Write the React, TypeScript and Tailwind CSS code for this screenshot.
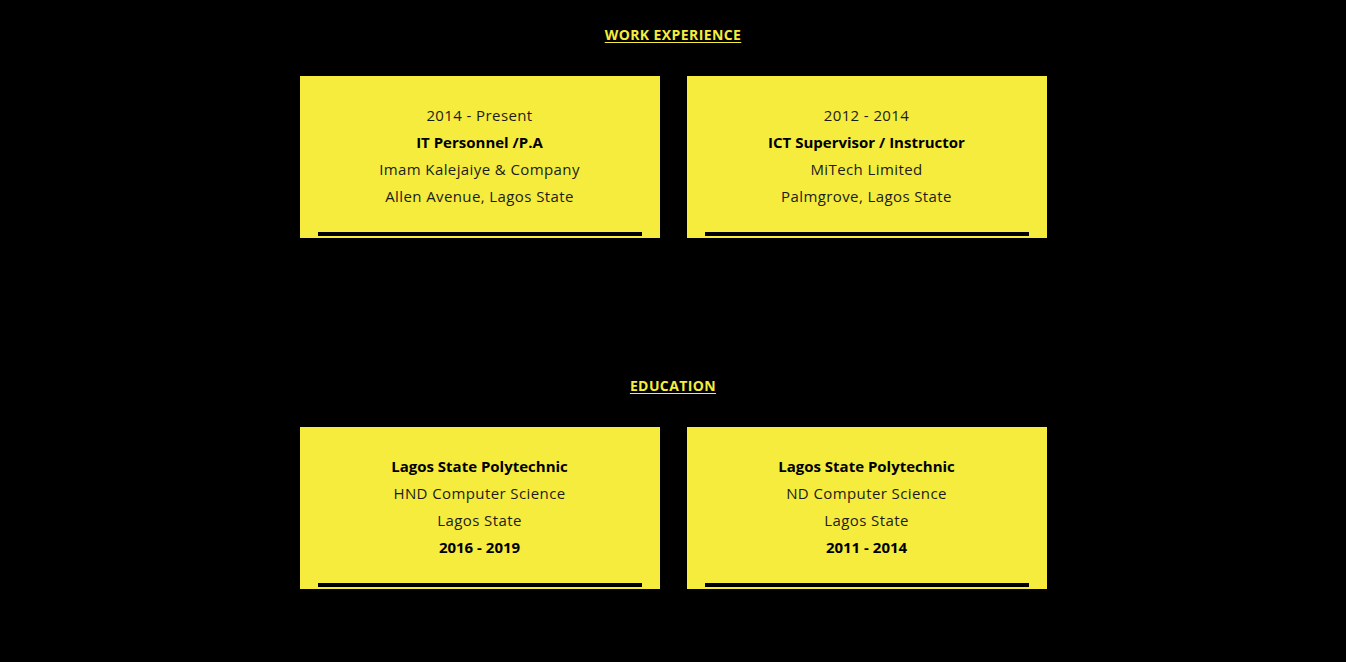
const work = [
	{ period: "2014 - Present", role: "IT Personnel /P.A", company: "Imam Kalejaiye & Company", place: "Allen Avenue, Lagos State" },
	{ period: "2012 - 2014", role: "ICT Supervisor / Instructor", company: "MiTech Limited", place: "Palmgrove, Lagos State" },
];

const education = [
	{ school: "Lagos State Polytechnic", course: "HND Computer Science", place: "Lagos State", years: "2016 - 2019" },
	{ school: "Lagos State Polytechnic", course: "ND Computer Science", place: "Lagos State", years: "2011 - 2014" },
];

function Card({ children }: { children: React.ReactNode }) {
	return (
		<div className="w-[360px] bg-[#f5ec3d] pt-[26px] pb-[2px] text-center">
			<div className="flex flex-col text-[15px] leading-[27px] tracking-[0.4px] text-[#1c1c1c]">{children}</div>
			<div className="mx-[18px] mt-[22px] h-1 bg-black" />
		</div>
	);
}

function Heading({ title }: { title: string }) {
	return (
		<h2 className="text-center text-[14px] leading-4 font-bold tracking-[0.4px] text-[#f5ec3d] underline underline-offset-2">
			{title}
		</h2>
	);
}

export default function App() {
	return (
		<div className="min-h-[662px] bg-black font-['Open_Sans',sans-serif] pt-[27px]">
			<Heading title="WORK EXPERIENCE" />
			<div className="mt-[33px] flex justify-center gap-[27px]">
				{work.map((w) => (
					<Card key={w.period}>
						<span>{w.period}</span>
						<span className="font-bold tracking-normal text-black">{w.role}</span>
						<span>{w.company}</span>
						<span>{w.place}</span>
					</Card>
				))}
			</div>

			<div className="mt-[140px]">
				<Heading title="EDUCATION" />
			</div>
			<div className="mt-[33px] flex justify-center gap-[27px]">
				{education.map((e) => (
					<Card key={e.years}>
						<span className="font-bold tracking-normal text-black">{e.school}</span>
						<span>{e.course}</span>
						<span>{e.place}</span>
						<span className="font-bold tracking-normal text-black">{e.years}</span>
					</Card>
				))}
			</div>
		</div>
	);
}
